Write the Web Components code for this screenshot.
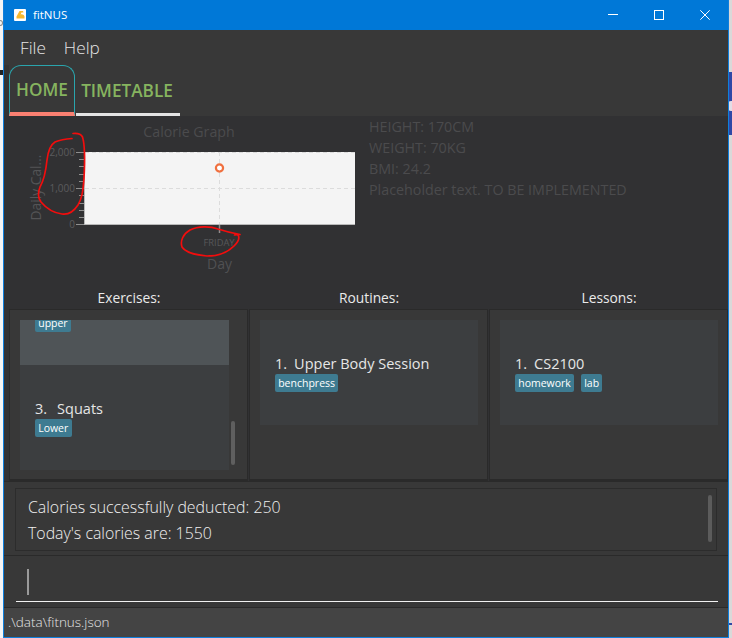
<!doctype html>
<html><head><meta charset="utf-8"><title>fitNUS</title>
<style>
html,body{margin:0;padding:0;height:638px;overflow:hidden;background:#e2e2e2;font-family:"Open Sans","Noto Sans",sans-serif}
</style></head><body>
<desktop-bg></desktop-bg>
<app-window>
  <title-bar></title-bar>
  <menu-bar><menu-item>File</menu-item><menu-item>Help</menu-item></menu-bar>
  <tab-bar><tab-item active>HOME</tab-item><tab-item>TIMETABLE</tab-item></tab-bar>
  <graph-section>
    <calorie-chart></calorie-chart>
    <info-panel><div>HEIGHT: 170CM</div><div>WEIGHT: 70KG</div><div>BMI: 24.2</div><div>Placeholder text. TO BE IMPLEMENTED</div></info-panel>
  </graph-section>
  <list-section>
    <list-panel heading="Exercises:" scroll>
      <list-card selected><tag-chip>upper</tag-chip></list-card>
      <list-card index="3." name="Squats" gap="10"><tag-chip>Lower</tag-chip></list-card>
    </list-panel>
    <list-panel heading="Routines:">
      <list-card index="1." name="Upper Body Session" gap="7"><tag-chip>benchpress</tag-chip></list-card>
    </list-panel>
    <list-panel heading="Lessons:">
      <list-card index="1." name="CS2100" gap="7"><tag-chip>homework</tag-chip><tag-chip>lab</tag-chip></list-card>
    </list-panel>
  </list-section>
  <result-box><div>Calories successfully deducted: 250</div><div>Today's calories are: 1550</div></result-box>
  <command-box></command-box>
  <status-bar>.\data\fitnus.json</status-bar>
</app-window>
<script>
function def(name, html){
  customElements.define(name, class extends HTMLElement{
    constructor(){super();const r=this.attachShadow({mode:'open'});r.innerHTML=typeof html==='function'?html(this):html;}
    connectedCallback(){ if(typeof html==='function'){this.shadowRoot.innerHTML=html(this);} }
  });
}
def('desktop-bg',`<style>
:host{display:block;position:absolute;inset:0;z-index:0}
.l{position:absolute;left:0;top:0;width:3px;height:638px;background:#f5f5f5}
.r{position:absolute;right:0;top:0;width:4px;height:638px;background:#d9d9d9}
.b{position:absolute;right:0;top:72px;width:4px;height:63px;background:#2f48a6}
.w{position:absolute;right:0;top:101px;width:4px;height:10px;border-radius:3px 0 0 3px;background:#e3dde6}
.d{position:absolute;left:0;top:70px;width:3px;height:5px;background:#222}
.e{position:absolute;left:0;top:20px;width:3px;height:6px;border:1px solid #888;box-sizing:border-box;border-left:0;border-radius:0 3px 3px 0}
.m{position:absolute;right:0;top:623px;width:4px;height:2px;background:#2f48a6}
</style><div class="l"></div><div class="r"></div><div class="b"></div><div class="w"></div><div class="d"></div><div class="e"></div><div class="m"></div>`);
def('app-window',`<style>
:host{display:flex;position:relative;z-index:1;flex-direction:column;box-sizing:border-box;width:726px;height:638px;margin-left:3px;border:solid #0f7fdc;border-width:0 1px 1px 1px;background:#383838;color:#eee}
</style><slot></slot>`);
def('title-bar',`<style>
:host{display:flex;align-items:center;height:30px;flex:none;background:#0078d7;color:#fff;font:11.5px "Open Sans","Noto Sans",sans-serif}
svg{display:block}
.ic{margin-left:10px;margin-right:7px;width:12px;height:12px}
.t{flex:1;position:relative;top:-1px}
.b{width:46px;height:30px;display:flex;align-items:center;justify-content:center}
.bs{display:flex}
</style>
<svg class="ic" viewBox="0 0 12 12"><rect width="12" height="12" rx="1" fill="#fff"/><path d="M5.500 2H9L9.500 3.500H7.500L6.600 5.500C8 5 10 5.500 10.500 7.500V9.500H2.500V7.500Z" fill="#f7b92f"/></svg>
<span class="t">fitNUS</span>
<div class="bs">
<div class="b"><svg width="10" height="10"><path d="M0 4.500H10" stroke="#fff"/></svg></div>
<div class="b"><svg width="10" height="10"><rect x=".5" y=".5" width="9" height="9" fill="none" stroke="#fff"/></svg></div>
<div class="b"><svg width="10" height="10"><path d="M.3 .3L9.700 9.700M9.700 .3L.3 9.700" stroke="#fff" fill="none"/></svg></div>
</div>`);
def('menu-bar',`<style>
:host{display:flex;align-items:center;gap:18px;height:35px;flex:none;padding-left:16px;background:#383838}
</style><slot></slot>`);
def('menu-item',`<style>
:host{display:block;font:300 17.2px "Open Sans","Noto Sans",sans-serif;color:#e6e6e6}
</style><slot></slot>`);
def('tab-bar',`<style>
:host{display:flex;align-items:stretch;height:51px;flex:none;background:#383838;border-left:5px solid #333;gap:1px}
</style><slot></slot>`);
def('tab-item',`<style>
:host{display:flex;box-sizing:border-box;align-items:center;justify-content:center;width:104px;padding:2px 2px 0 0;font:600 17.2px "Open Sans","Noto Sans",sans-serif;color:#86b45f;border-bottom:3px solid #e4e4e4}
:host([active]){width:66px;border:1px solid #2aa5ad;border-bottom:4px solid #fa8072;border-radius:12px 12px 0 0;padding:0}
</style><slot></slot>`);
def('graph-section',`<style>
:host{display:flex;height:172px;flex:none;background:#313133;overflow:hidden}
</style><slot></slot>`);
def('calorie-chart',`<style>
:host{display:block;width:362px;height:172px;flex:none}
svg{display:block}
text{font-family:"Open Sans","Noto Sans",sans-serif}
</style>
<svg width="362" height="172" viewBox="4 116 362 172">
<text x="189" y="137" text-anchor="middle" font-size="14.2" fill="#4b4b4d">Calorie Graph</text>
<rect x="85" y="152" width="270" height="72" fill="#f4f4f4"/>
<path d="M85 152.500H355M85 188.500H355M219.500 152V224" stroke="#dcdcdc" stroke-dasharray="4 3"/>
<path d="M84.500 152V225M85 224.500H355" stroke="#b9b9b9"/>
<path d="M76 152.500H84M76 188.500H84M76 224.500H84M79 159.500H84M79 166.500H84M79 174.500H84M79 181.500H84M79 195.500H84M79 203.500H84M79 210.500H84M79 217.500H84" stroke="#8f8f8f"/>
<path d="M219.500 225V233" stroke="#8f8f8f" stroke-width="1.500"/>
<g font-size="10" fill="#5b5b5d" text-anchor="end"><text x="75" y="156">2,000</text><text x="75" y="192">1,000</text><text x="75" y="228">0</text></g>
<text transform="translate(41 187.500) rotate(-90)" text-anchor="middle" font-size="13.800" fill="#545456">Daily Cal...</text>
<circle cx="219.500" cy="168" r="3.600" fill="#fff" stroke="#f0703f" stroke-width="2.200"/>
<text x="219" y="246" text-anchor="middle" font-size="9.300" fill="#58585a">FRIDAY</text>
<text x="219.500" y="269" text-anchor="middle" font-size="14" fill="#505052">Day</text>
<g fill="none" stroke="#f20d0d" stroke-width="1.700" stroke-linecap="round" stroke-linejoin="round">
<path d="M73 133.500C78 133 81 134 82.500 137C85 145 85 160 84 178C83 192 82 198 78 205C74 211 68 215 62 214C54 213 46 208 41 202C38 198 38 192 40 187C44 180 46 170 47 160C48 152 50 145 55 142C60 140 66 139 72 138.500"/>
<path d="M240 234.500C232 233 224 231 218 229C210 226 198 226 190 230C183 234 180 241 182 247C185 252 196 255 207 256C218 256 228 252 234 246C238 242 240 238 238 235C236 234 235 235 234.500 235"/>
</g></svg>`);
def('info-panel',`<style>
:host{display:block;margin:0 0 0 3px;color:#4b4b4d;font:400 14.3px/21px "Open Sans","Noto Sans",sans-serif;white-space:nowrap}
</style><slot></slot>`);
def('list-section',`<style>
:host{display:flex;flex:none;height:193px;background:#313133;padding-left:5px;gap:1px}
</style><slot></slot>`);
def('list-panel',h=>`<style>
:host{display:flex;flex-direction:column;flex:none;width:239px}
.h{height:21px;box-sizing:border-box;text-align:center;font:400 13.8px/20px "Open Sans","Noto Sans",sans-serif;color:#eaeaea;padding-left:1px}
.p{position:relative;flex:1;box-sizing:border-box;background:#383838;border:1px solid #2a2a2a;padding:10px 9px 9px 10px;border-bottom-width:2px}
.p.sc{padding-right:18px}
.s{display:flex;flex-direction:column;height:100%;overflow:hidden}
.th{position:absolute;right:12px;bottom:14px;width:4px;height:44px;border-radius:2px;background:#5f5f5f}
</style><div class="h">${h.getAttribute('heading')||''}</div><div class="p${h.hasAttribute('scroll')?' sc':''}"><div class="s"><slot></slot></div>${h.hasAttribute('scroll')?'<div class="th"></div>':''}</div>`);
def('list-card',h=>h.hasAttribute('selected')?`<style>
:host{display:block;flex:none;height:45px;background:#4f5457;overflow:hidden;padding-left:15px}
.tags{display:flex;gap:7px;margin-top:-6px}
</style><div class="tags"><slot></slot></div>`:`<style>
:host{display:block;flex:none;box-sizing:border-box;height:105px;background:#3c3e40;padding:33px 15px 0}
.n{display:flex;font:400 14.5px/21px "Open Sans","Noto Sans",sans-serif;color:#e6e6e6;white-space:nowrap}
.tags{display:flex;gap:7px}
</style><div class="n" style="gap:${h.getAttribute('gap')||8}px"><span>${h.getAttribute('index')}</span><span>${h.getAttribute('name')}</span></div><div class="tags"><slot></slot></div>`);
def('tag-chip',`<style>
:host{display:block;box-sizing:border-box;height:18px;padding:0 3.2px;background:#3e7b91;border-radius:2px;color:#fff;font:400 10.5px/19px "Open Sans","Noto Sans",sans-serif;white-space:nowrap}
</style><slot></slot>`);
def('result-box',`<style>
:host{display:block;flex:none;height:75px;box-sizing:border-box;padding:6px 11px;background:#383838;border-top:1px solid #2a2a2a;border-bottom:1px solid #2a2a2a}
.b{position:relative;box-sizing:border-box;height:63px;border:1px solid #2c2c2c;padding:5px 12px;font:300 15.9px/26px "Open Sans","Noto Sans",sans-serif;color:#f0f0f0}
.th{position:absolute;right:4px;top:6px;width:4px;height:47px;border-radius:2px;background:#5c5c5c}
</style><div class="b"><slot></slot><div class="th"></div></div>`);
def('command-box',`<style>
:host{display:block;flex:none;height:52px;box-sizing:border-box;padding:0 10px 0 12px;background:#383838;border-bottom:1px solid #2a2a2a}
.i{box-sizing:border-box;height:46px;border-bottom:1px solid #f2f2f2;padding:13px 0 0 11px}
.c{width:2px;height:26px;background:#9a9a9a}
</style><div class="i"><div class="c"></div></div>`);
def('status-bar',`<style>
:host{display:block;flex:1;background:#444;padding-left:4px;color:#e4e4e4;font:300 13.5px/29px "Open Sans","Noto Sans",sans-serif}
</style><slot></slot>`);
</script>
</body></html>
